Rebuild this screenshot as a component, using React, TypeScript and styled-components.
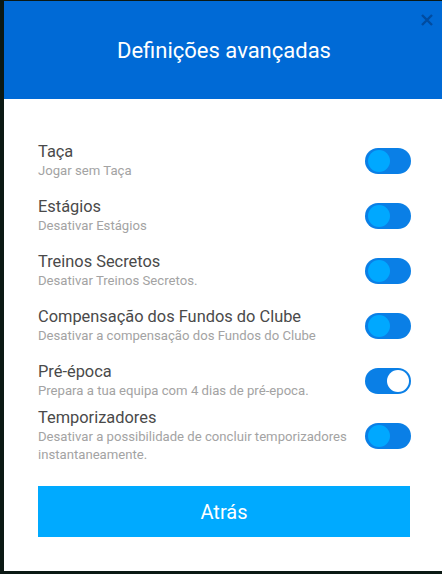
import React, { FC, useState } from 'react';
import styled, { createGlobalStyle } from 'styled-components';

const GlobalStyle = createGlobalStyle`
  html, body {
    margin: 0;
    padding: 0;
    background: #0b1914;
    font-family: Roboto, "Liberation Sans", sans-serif;
  }
`;

const Overlay = styled.div`
  width: 442px;
  height: 574px;
  overflow: hidden;
  padding: 1px 0 0 4px;
  box-sizing: border-box;
`;

const Modal = styled.div`
  position: relative;
  width: 440px;
  height: 570px;
  background: #fff;
  display: flex;
  flex-direction: column;
`;

const Header = styled.div`
  height: 98px;
  background: #006ad6;
  display: flex;
  align-items: center;
  justify-content: center;
`;

const Title = styled.h1`
  margin: 0;
  color: #fff;
  font-size: 22px;
  font-weight: 400;
`;

const CloseButton = styled.button`
  position: absolute;
  top: 12px;
  right: 10px;
  width: 14px;
  height: 14px;
  padding: 0;
  border: 0;
  background: none;
  cursor: pointer;
`;

const Body = styled.div`
  padding: 34px 33px 34px 34px;
  display: flex;
  flex-direction: column;
  flex: 1;
`;

const List = styled.div`
  display: flex;
  flex-direction: column;
`;

const Row = styled.div`
  min-height: 55px;
  display: flex;
  align-items: center;
  justify-content: space-between;
`;

const Texts = styled.div`
  width: 318px;
  display: flex;
  flex-direction: column;
`;

const RowTitle = styled.div`
  font-size: 16.4px;
  line-height: 20px;
  color: #4a4a4a;
`;

const RowSub = styled.div`
  font-size: 13.15px;
  line-height: 18px;
  color: #a3a3a3;
`;

const Track = styled.button<{ $on: boolean }>`
  position: relative;
  width: 46px;
  height: 26px;
  border-radius: 13px;
  border: 0;
  padding: 0;
  background: #0a7fe6;
  cursor: pointer;
  flex-shrink: 0;
`;

const Knob = styled.span<{ $on: boolean }>`
  position: absolute;
  top: 2px;
  left: ${p => (p.$on ? '22px' : '3px')};
  width: 22px;
  height: 22px;
  border-radius: 50%;
  background: ${p => (p.$on ? '#fff' : '#00a8ff')};
`;

const BackButton = styled.button`
  margin-top: 22px;
  width: 372px;
  height: 51px;
  border: 0;
  background: #00aaff;
  color: #fff;
  font-family: Roboto, "Liberation Sans", sans-serif;
  font-size: 20px;
  cursor: pointer;
`;

const settings = [
  { title: 'Taça', sub: 'Jogar sem Taça', on: false },
  { title: 'Estágios', sub: 'Desativar Estágios', on: false },
  { title: 'Treinos Secretos', sub: 'Desativar Treinos Secretos.', on: false },
  { title: 'Compensação dos Fundos do Clube', sub: 'Desativar a compensação dos Fundos do Clube', on: false },
  { title: 'Pré-época', sub: 'Prepara a tua equipa com 4 dias de pré-epoca.', on: true },
  { title: 'Temporizadores', sub: 'Desativar a possibilidade de concluir temporizadores instantaneamente.', on: false },
];

const App: FC = () => {
  const [values, setValues] = useState(settings.map(s => s.on));

  const toggle = (i: number) =>
    setValues(v => v.map((x, j) => (j === i ? !x : x)));

  return (
    <Overlay>
      <GlobalStyle />
      <Modal>
        <Header>
          <Title>Definições avançadas</Title>
        </Header>
        <CloseButton aria-label="Fechar">
          <svg width="14" height="14" viewBox="0 0 14 14">
            <path d="M2 2 L12 12 M12 2 L2 12" stroke="rgba(0,20,60,0.35)" strokeWidth="2.4" />
          </svg>
        </CloseButton>
        <Body>
          <List>
            {settings.map((s, i) => (
              <Row key={s.title}>
                <Texts>
                  <RowTitle>{s.title}</RowTitle>
                  <RowSub>{s.sub}</RowSub>
                </Texts>
                <Track $on={values[i]} onClick={() => toggle(i)}>
                  <Knob $on={values[i]} />
                </Track>
              </Row>
            ))}
          </List>
          <BackButton>Atrás</BackButton>
        </Body>
      </Modal>
    </Overlay>
  );
};

export default App;
